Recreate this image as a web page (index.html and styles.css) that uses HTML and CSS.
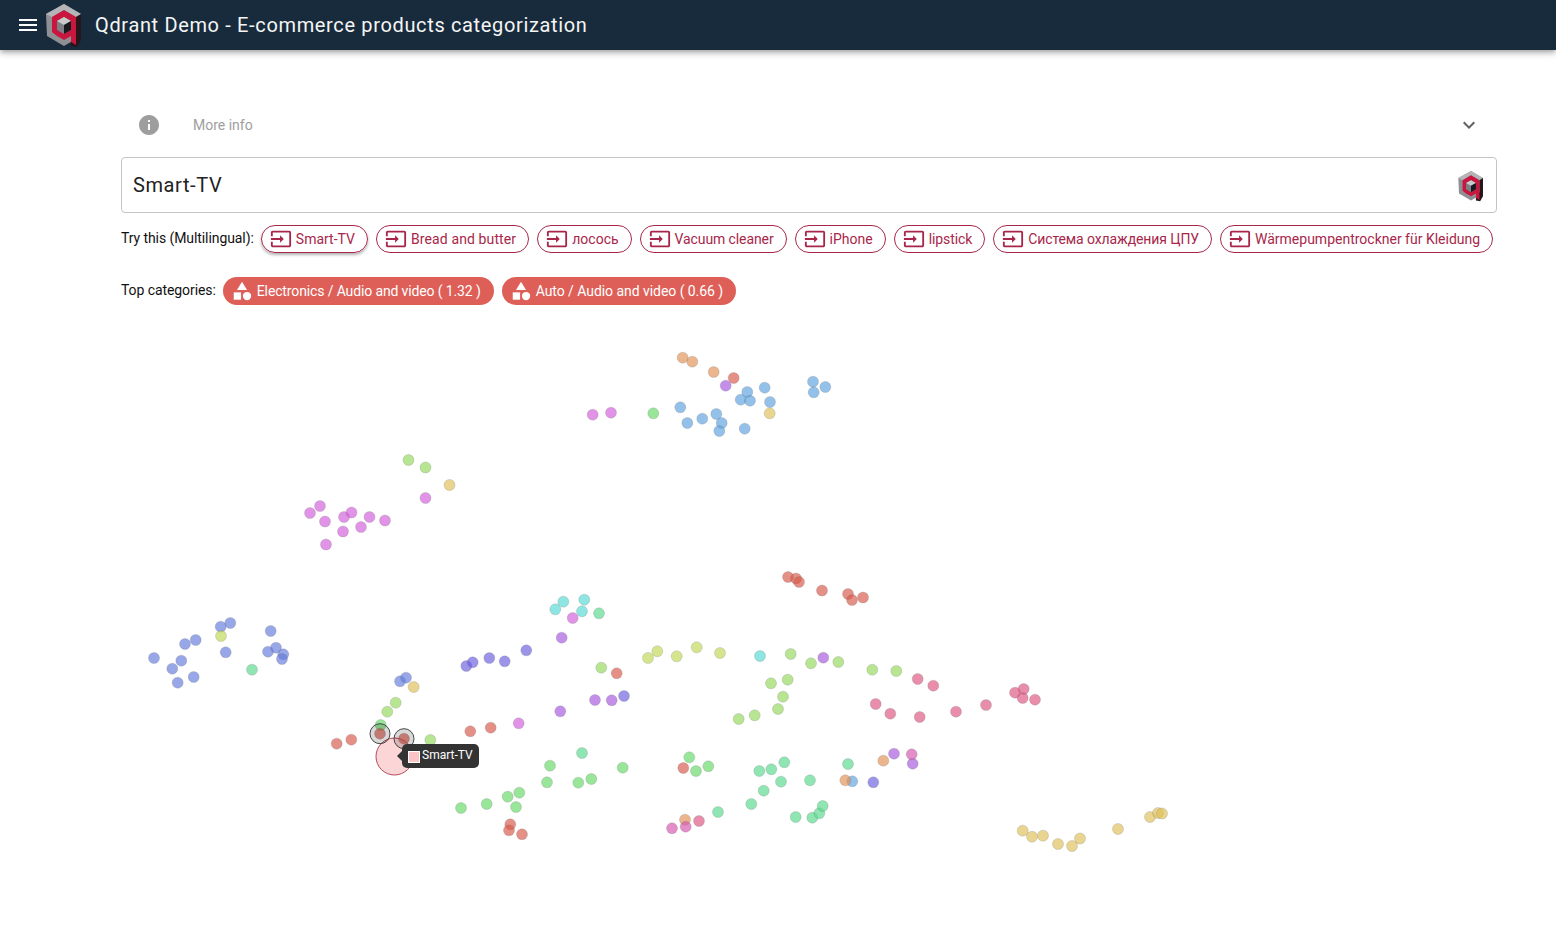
FILE: index.html
```html
<!DOCTYPE html>
<html>
<head>
    <title>Qdrant Demo - E-commerce products categorization</title>
    <link rel="stylesheet" href="styles.css">
</head>
<body>
    <svg class="defs">
        <symbol id="qdrant-logo" viewBox="0 0 36 44">
            <polygon points="18,0 35,10 35,32 18,42 1,32 0,10" fill="#8f9094"/>
            <polygon points="18,0 35,10 30,13 18,6 6,13 0,10" fill="#b4b5b8"/>
            <polygon points="35,10 35,36 31,43 25,42 25,35 30,30 30,13" fill="#26161c"/>
            <polygon points="18,6 30,13 30,41 25,38 25,32 18,36 11,32 6,28 6,13" fill="#c8163f"/>
            <polygon points="18,13 25,17 25,26 18,30 11,26 11,17" fill="#7d7f84"/>
            <polygon points="18,13 25,17 18,21 11,17" fill="#c9cacc"/>
            <polygon points="25,17 25,26 18,30 18,21" fill="#17191d"/>
        </symbol>
        <symbol id="icon-input" viewBox="0 0 24 24">
            <path d="M21 3.01H3c-1.1 0-2 .9-2 2V9h2V4.99h18v14.03H3V15H1v4.01c0 1.1.9 1.98 2 1.98h18c1.1 0 2-.88 2-1.98v-14c0-1.11-.9-2-2-2zM11 16l4-4-4-4v3H1v2h10v3z"/>
        </symbol>
        <symbol id="icon-category" viewBox="0 0 24 24">
            <path d="M12 2l-5.5 9h11z"/>
            <circle cx="17.5" cy="17.5" r="4.5"/>
            <path d="M3 13.5h8v8H3z"/>
        </symbol>
    </svg>

    <header class="app-bar">
        <svg class="menu-icon" viewBox="0 0 24 24"><path d="M3 18h18v-2H3v2zm0-5h18v-2H3v2zm0-7v2h18V6H3z"/></svg>
        <svg class="app-logo"><use href="#qdrant-logo"/></svg>
        <div class="app-title">Qdrant Demo - E-commerce products categorization</div>
    </header>

    <main class="content">
        <div class="more-info">
            <svg class="info-icon" viewBox="0 0 24 24"><path d="M12 2C6.48 2 2 6.48 2 12s4.48 10 10 10 10-4.48 10-10S17.52 2 12 2zm1 15h-2v-6h2v6zm0-8h-2V7h2v2z"/></svg>
            <span class="more-info-text">More info</span>
            <svg class="expand-icon" viewBox="0 0 24 24"><path d="M16.59 8.59L12 13.17 7.41 8.59 6 10l6 6 6-6z"/></svg>
        </div>

        <div class="search-box">
            <span class="search-text">Smart-TV</span>
            <svg class="search-logo"><use href="#qdrant-logo"/></svg>
        </div>

        <div class="chip-row try-row">
            <span class="row-label">Try this (Multilingual):</span>
            <span class="chip chip-outlined chip-active"><svg class="chip-icon"><use href="#icon-input"/></svg>Smart-TV</span>
            <span class="chip chip-outlined chip-wide"><svg class="chip-icon"><use href="#icon-input"/></svg>Bread and butter</span>
            <span class="chip chip-outlined"><svg class="chip-icon"><use href="#icon-input"/></svg>лосось</span>
            <span class="chip chip-outlined chip-tight"><svg class="chip-icon"><use href="#icon-input"/></svg>Vacuum cleaner</span>
            <span class="chip chip-outlined"><svg class="chip-icon"><use href="#icon-input"/></svg>iPhone</span>
            <span class="chip chip-outlined chip-tight"><svg class="chip-icon"><use href="#icon-input"/></svg>lipstick</span>
            <span class="chip chip-outlined chip-tight"><svg class="chip-icon"><use href="#icon-input"/></svg>Система охлаждения ЦПУ</span>
            <span class="chip chip-outlined"><svg class="chip-icon"><use href="#icon-input"/></svg>Wärmepumpentrockner für Kleidung</span>
        </div>

        <div class="chip-row category-row">
            <span class="row-label">Top categories:</span>
            <span class="chip chip-filled"><svg class="chip-icon"><use href="#icon-category"/></svg>Electronics / Audio and video ( 1.32 )</span>
            <span class="chip chip-filled"><svg class="chip-icon"><use href="#icon-category"/></svg>Auto / Audio and video ( 0.66 )</span>
        </div>

        <div class="chart">
            <svg class="chart-svg" viewBox="121 320 1376 632">
                <g class="dots blue">
                    <circle cx="747.3" cy="392" r="5.5"/><circle cx="740.7" cy="399.7" r="5.5"/><circle cx="750" cy="400.7" r="5.5"/><circle cx="764.7" cy="387.7" r="5.5"/><circle cx="770" cy="402" r="5.5"/><circle cx="813" cy="381.7" r="5.5"/><circle cx="825.3" cy="387" r="5.5"/><circle cx="813.7" cy="392.3" r="5.5"/><circle cx="680.3" cy="407.3" r="5.5"/><circle cx="687.3" cy="423" r="5.5"/><circle cx="702.3" cy="418.7" r="5.5"/><circle cx="716.3" cy="414" r="5.5"/><circle cx="721.7" cy="423" r="5.5"/><circle cx="719.3" cy="431" r="5.5"/><circle cx="744.7" cy="428.7" r="5.5"/><circle cx="852.3" cy="781.3" r="5.5"/>
                </g>
                <g class="dots orange">
                    <circle cx="682.7" cy="357.7" r="5.5"/><circle cx="692.3" cy="361.7" r="5.5"/><circle cx="713.7" cy="372" r="5.5"/><circle cx="685" cy="819.7" r="5.5"/><circle cx="883.3" cy="760.7" r="5.5"/><circle cx="845.3" cy="780.3" r="5.5"/>
                </g>
                <g class="dots red">
                    <circle cx="733.7" cy="378" r="5.5"/><circle cx="788" cy="577" r="5.5"/><circle cx="796" cy="578.5" r="5.5"/><circle cx="799" cy="582" r="5.5"/><circle cx="822" cy="590.5" r="5.5"/><circle cx="848" cy="594" r="5.5"/><circle cx="852" cy="600" r="5.5"/><circle cx="863" cy="597.5" r="5.5"/><circle cx="336.7" cy="743.7" r="5.5"/><circle cx="351.3" cy="739.7" r="5.5"/><circle cx="470.3" cy="731.3" r="5.5"/><circle cx="490.7" cy="727.7" r="5.5"/><circle cx="616.7" cy="673.3" r="5.5"/><circle cx="510.3" cy="824.3" r="5.5"/><circle cx="509" cy="830.3" r="5.5"/><circle cx="522" cy="834.3" r="5.5"/><circle cx="683.3" cy="768" r="5.5"/>
                </g>
                <g class="dots purple">
                    <circle cx="725.7" cy="385.7" r="5.5"/><circle cx="561.7" cy="637.7" r="5.5"/><circle cx="595" cy="700" r="5.5"/><circle cx="611.7" cy="700.3" r="5.5"/><circle cx="560.3" cy="711.3" r="5.5"/><circle cx="823.3" cy="657.7" r="5.5"/><circle cx="894" cy="753.7" r="5.5"/><circle cx="912.7" cy="763.7" r="5.5"/>
                </g>
                <g class="dots magenta">
                    <circle cx="592.7" cy="414.7" r="5.5"/><circle cx="611" cy="412.7" r="5.5"/><circle cx="425.5" cy="498" r="5.5"/><circle cx="320" cy="506" r="5.5"/><circle cx="310" cy="513" r="5.5"/><circle cx="325" cy="521.5" r="5.5"/><circle cx="344" cy="517" r="5.5"/><circle cx="351.5" cy="512.5" r="5.5"/><circle cx="369.5" cy="517" r="5.5"/><circle cx="385" cy="520.5" r="5.5"/><circle cx="361" cy="527" r="5.5"/><circle cx="343" cy="531.5" r="5.5"/><circle cx="326" cy="544.5" r="5.5"/><circle cx="572.7" cy="618" r="5.5"/><circle cx="518.7" cy="723.3" r="5.5"/>
                </g>
                <g class="dots rose-magenta">
                    <circle cx="672" cy="828.3" r="5.5"/><circle cx="685.7" cy="826.7" r="5.5"/><circle cx="911.7" cy="754.3" r="5.5"/>
                </g>
                <g class="dots green">
                    <circle cx="653.3" cy="413.3" r="5.5"/><circle cx="550" cy="765.7" r="5.5"/><circle cx="622.7" cy="767.7" r="5.5"/><circle cx="547" cy="782.3" r="5.5"/><circle cx="578.3" cy="782.7" r="5.5"/><circle cx="591.3" cy="779" r="5.5"/><circle cx="461" cy="808" r="5.5"/><circle cx="486.7" cy="804" r="5.5"/><circle cx="507.7" cy="796.7" r="5.5"/><circle cx="519.3" cy="792.7" r="5.5"/><circle cx="516" cy="807" r="5.5"/><circle cx="689.3" cy="757.3" r="5.5"/><circle cx="696" cy="771" r="5.5"/><circle cx="708.3" cy="766.3" r="5.5"/><circle cx="380.7" cy="725" r="5.5"/>
                </g>
                <g class="dots slate">
                    <circle cx="154" cy="658" r="5.5"/><circle cx="185" cy="644" r="5.5"/><circle cx="195.7" cy="640" r="5.5"/><circle cx="181.3" cy="660.7" r="5.5"/><circle cx="172.3" cy="668.7" r="5.5"/><circle cx="177.7" cy="682.7" r="5.5"/><circle cx="193.7" cy="677" r="5.5"/><circle cx="220.7" cy="626.7" r="5.5"/><circle cx="230.3" cy="623" r="5.5"/><circle cx="225.7" cy="652.3" r="5.5"/><circle cx="270.7" cy="631" r="5.5"/><circle cx="268" cy="651.7" r="5.5"/><circle cx="276" cy="647.7" r="5.5"/><circle cx="283.3" cy="654.3" r="5.5"/><circle cx="282" cy="659" r="5.5"/><circle cx="400" cy="681.3" r="5.5"/><circle cx="406" cy="677.7" r="5.5"/>
                </g>
                <g class="dots yellow-green">
                    <circle cx="221" cy="636" r="5.5"/><circle cx="648" cy="658" r="5.5"/><circle cx="657.3" cy="651.3" r="5.5"/><circle cx="676.7" cy="656.3" r="5.5"/><circle cx="696.7" cy="647.3" r="5.5"/><circle cx="720" cy="653" r="5.5"/>
                </g>
                <g class="dots lime">
                    <circle cx="408.5" cy="460" r="5.5"/><circle cx="425.5" cy="467.5" r="5.5"/><circle cx="395.7" cy="702.7" r="5.5"/><circle cx="387.3" cy="711.7" r="5.5"/><circle cx="430.3" cy="740" r="5.5"/><circle cx="601.3" cy="667.7" r="5.5"/><circle cx="738.7" cy="719" r="5.5"/><circle cx="790.7" cy="654" r="5.5"/><circle cx="811" cy="663.3" r="5.5"/><circle cx="838.3" cy="662" r="5.5"/><circle cx="872.3" cy="669.7" r="5.5"/><circle cx="896.3" cy="671" r="5.5"/><circle cx="771" cy="683.3" r="5.5"/><circle cx="787.7" cy="679.7" r="5.5"/><circle cx="783" cy="696.7" r="5.5"/><circle cx="778" cy="709" r="5.5"/><circle cx="754.7" cy="715.3" r="5.5"/>
                </g>
                <g class="dots mint">
                    <circle cx="252" cy="669.7" r="5.5"/><circle cx="599" cy="613.3" r="5.5"/><circle cx="582" cy="753" r="5.5"/><circle cx="718" cy="812" r="5.5"/><circle cx="751.3" cy="804" r="5.5"/><circle cx="784.3" cy="762.3" r="5.5"/><circle cx="759.3" cy="771" r="5.5"/><circle cx="771.3" cy="769.3" r="5.5"/><circle cx="781" cy="781.7" r="5.5"/><circle cx="763.7" cy="790.7" r="5.5"/><circle cx="810" cy="780.3" r="5.5"/><circle cx="848" cy="764" r="5.5"/><circle cx="795.7" cy="817" r="5.5"/><circle cx="812.3" cy="817.7" r="5.5"/><circle cx="819.3" cy="813.3" r="5.5"/><circle cx="822.7" cy="806" r="5.5"/>
                </g>
                <g class="dots cyan">
                    <circle cx="563.3" cy="601.7" r="5.5"/><circle cx="584.3" cy="599.7" r="5.5"/><circle cx="555.3" cy="609.3" r="5.5"/><circle cx="582" cy="611.3" r="5.5"/><circle cx="760" cy="656" r="5.5"/>
                </g>
                <g class="dots violet">
                    <circle cx="466.3" cy="666" r="5.5"/><circle cx="472.7" cy="662.3" r="5.5"/><circle cx="489.3" cy="658" r="5.5"/><circle cx="504.7" cy="661.3" r="5.5"/><circle cx="526.3" cy="650.3" r="5.5"/><circle cx="624" cy="696" r="5.5"/><circle cx="873.3" cy="782.3" r="5.5"/>
                </g>
                <g class="dots rose">
                    <circle cx="699" cy="821" r="5.5"/><circle cx="917.7" cy="679" r="5.5"/><circle cx="933.3" cy="685.7" r="5.5"/><circle cx="875.7" cy="704" r="5.5"/><circle cx="890.3" cy="713.7" r="5.5"/><circle cx="919.7" cy="717" r="5.5"/><circle cx="956" cy="711.7" r="5.5"/><circle cx="986" cy="705" r="5.5"/><circle cx="1015" cy="692.7" r="5.5"/><circle cx="1023.7" cy="689" r="5.5"/><circle cx="1022.7" cy="698" r="5.5"/><circle cx="1035" cy="699.7" r="5.5"/>
                </g>
                <g class="dots yellow">
                    <circle cx="769.7" cy="413.3" r="5.5"/><circle cx="449.5" cy="485" r="5.5"/><circle cx="413.7" cy="687" r="5.5"/><circle cx="1022.7" cy="830.7" r="5.5"/><circle cx="1032" cy="836.7" r="5.5"/><circle cx="1043" cy="835.7" r="5.5"/><circle cx="1058" cy="844" r="5.5"/><circle cx="1072" cy="846" r="5.5"/><circle cx="1080" cy="838.5" r="5.5"/><circle cx="1118" cy="829" r="5.5"/><circle cx="1150" cy="817" r="5.5"/><circle cx="1158" cy="813" r="5.5"/><circle cx="1162" cy="813.5" r="5.5"/>
                </g>
                <circle class="query-point" cx="394.5" cy="756.5" r="18.5"/>
                <g class="dots red">
                    <circle cx="380" cy="733.7" r="5.5"/><circle cx="404" cy="738.7" r="5.5"/>
                </g>
                <circle class="neighbor-ring" cx="380" cy="733.7" r="10"/>
                <circle class="neighbor-ring" cx="404" cy="738.7" r="10"/>
            </svg>
            <div class="chart-tooltip">
                <span class="tooltip-swatch"></span>
                <span class="tooltip-text">Smart-TV</span>
            </div>
        </div>
    </main>
</body>
</html>
```

FILE: styles.css
```css
body {
    margin: 0;
    font-family: Roboto, "Noto Sans", sans-serif;
    font-size: 14px;
    color: #111;
    background-color: #fff;
    overflow: hidden;
}
.defs {
    display: none;
}
.app-bar {
    display: flex;
    align-items: center;
    height: 50px;
    padding-left: 16px;
    background-color: #182b3c;
    box-shadow: 0 2px 4px -1px rgba(0,0,0,.2), 0 4px 5px 0 rgba(0,0,0,.14), 0 1px 10px 0 rgba(0,0,0,.12);
}
.menu-icon {
    width: 24px;
    height: 24px;
    fill: #fff;
}
.app-logo {
    width: 36px;
    height: 44px;
    margin-left: 6px;
    margin-top: 2px;
}
.app-title {
    margin-left: 13px;
    font-size: 20px;
    letter-spacing: 0.65px;
    color: #f5f5f5;
}
.content {
    padding: 51px 59px 0 121px;
}
.more-info {
    display: flex;
    align-items: center;
    height: 48px;
    padding: 0 16px;
}
.info-icon {
    width: 24px;
    height: 24px;
    fill: #9e9e9e;
}
.more-info-text {
    margin-left: 32px;
    color: #9e9e9e;
}
.expand-icon {
    width: 24px;
    height: 24px;
    margin-left: auto;
    fill: #616161;
}
.search-box {
    display: flex;
    align-items: center;
    justify-content: space-between;
    box-sizing: border-box;
    height: 56px;
    margin-top: 8px;
    padding: 0 12px 0 11px;
    border: 1px solid #c4c4c4;
    border-radius: 4px;
}
.search-text {
    font-size: 20px;
    letter-spacing: 0.6px;
    color: #222;
}
.search-logo {
    width: 26px;
    height: 31px;
    margin-top: 3px;
}
.chip-row {
    display: flex;
    align-items: center;
    gap: 8px;
}
.try-row {
    margin-top: 12px;
}
.category-row {
    margin-top: 24px;
}
.row-label {
    margin-right: -1px;
    margin-top: -2px;
    letter-spacing: -0.08px;
    white-space: nowrap;
}
.chip {
    display: inline-flex;
    align-items: center;
    box-sizing: border-box;
    height: 28px;
    padding: 0 13px 0 8px;
    border-radius: 14px;
    white-space: nowrap;
}
.chip-tight {
    letter-spacing: -0.1px;
}
.chip-wide {
    letter-spacing: 0.12px;
}
.chip-icon {
    width: 22px;
    height: 22px;
    margin-right: 4px;
    fill: currentColor;
}
.chip-outlined {
    padding-right: 12px;
    border: 1px solid #a8264a;
    color: #a8264a;
}
.chip-active {
    box-shadow: 0 2px 3px rgba(0,0,0,.3);
}
.chip-filled {
    background-color: #de5f58;
    color: #fff;
    letter-spacing: -0.13px;
}
.chip-filled + .chip-filled {
    letter-spacing: -0.05px;
}
.chart {
    position: relative;
    margin-top: 15px;
}
.chart-svg {
    display: block;
    width: 1376px;
    height: 632px;
}
.dots circle {
    fill-opacity: .66;
    stroke: rgba(110,110,110,.22);
    stroke-width: 1;
}
.blue { fill: #5ca1dd; }
.orange { fill: #e09053; }
.red { fill: #d85648; }
.purple { fill: #a455dd; }
.magenta { fill: #d25cda; }
.rose-magenta { fill: #d554ab; }
.green { fill: #64d864; }
.slate { fill: #637adc; }
.yellow-green { fill: #c0d854; }
.lime { fill: #93d85a; }
.mint { fill: #55d98b; }
.cyan { fill: #54d9d4; }
.violet { fill: #675cdd; }
.rose { fill: #dc547f; }
.yellow { fill: #ddbf55; }
.query-point {
    fill: #fcd6d6;
    stroke: #b5485a;
    stroke-width: 1;
}
.neighbor-ring {
    fill: rgba(0,0,0,.15);
    stroke: #444;
    stroke-width: 1;
}
.chart-tooltip {
    position: absolute;
    left: 281px;
    top: 424px;
    display: flex;
    align-items: center;
    box-sizing: border-box;
    width: 77px;
    height: 24px;
    padding-left: 6px;
    border-radius: 5px;
    background-color: #333;
    color: #fff;
    font-size: 12px;
}
.chart-tooltip::before {
    content: "";
    position: absolute;
    left: -5px;
    top: 7px;
    border-top: 5px solid transparent;
    border-bottom: 5px solid transparent;
    border-right: 5px solid #333;
}
.tooltip-swatch {
    box-sizing: border-box;
    width: 12px;
    height: 12px;
    margin-top: 1px;
    border: 1px solid #fff;
    background-color: #fcc4c4;
}
.tooltip-text {
    margin-left: 2px;
    margin-top: -3px;
}
```
